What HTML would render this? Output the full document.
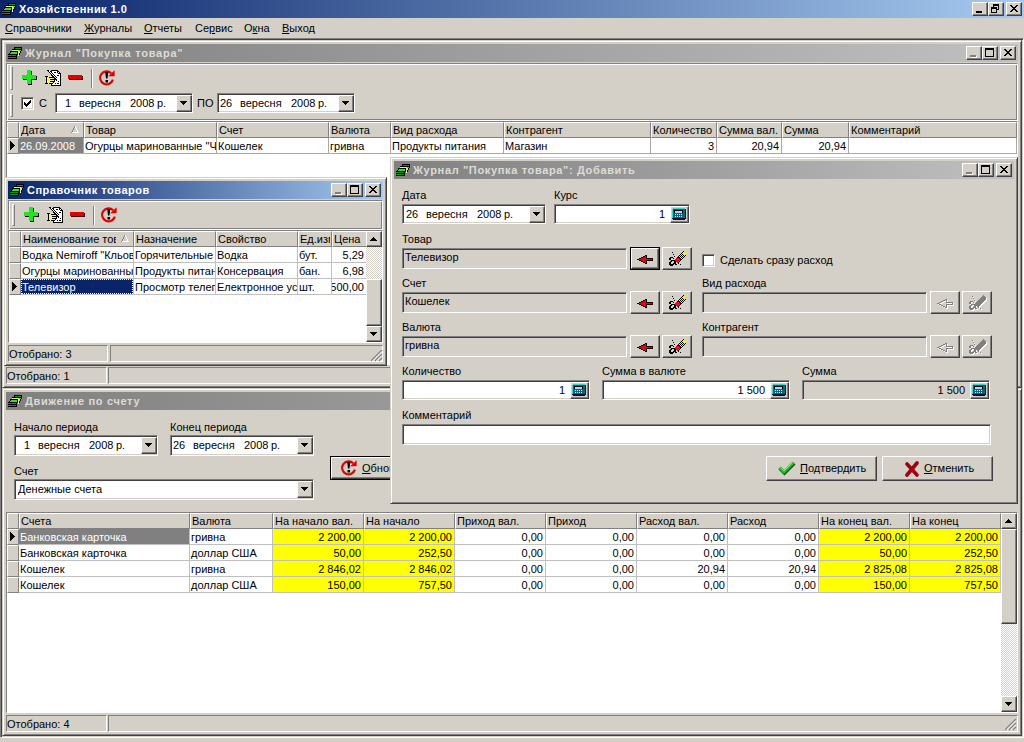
<!DOCTYPE html><html><head><meta charset="utf-8"><style>
html,body{margin:0;padding:0;}
body{width:1024px;height:742px;position:relative;overflow:hidden;background:#D4D0C8;font-family:"Liberation Sans",sans-serif;font-size:11px;}
div{position:absolute;box-sizing:border-box;}
.t{white-space:nowrap;line-height:13px;color:#000;}
.wf{background:#D4D0C8;border:1px solid;border-color:#D4D0C8 #404040 #404040 #D4D0C8;box-shadow:inset 1px 1px #fff,inset -1px -1px #808080;}
.rb{background:#D4D0C8;border:1px solid;border-color:#fff #404040 #404040 #fff;box-shadow:inset -1px -1px #808080;}
.sk{background:#fff;border:1px solid;border-color:#808080 #fff #fff #808080;box-shadow:inset 1px 1px #404040,inset -1px -1px #D4D0C8;}
.sk1{border:1px solid;border-color:#808080 #fff #fff #808080;}
u{text-decoration:underline;text-decoration-thickness:1px;text-underline-offset:1px;}
</style></head><body>
<div class="" style="left:0px;top:0px;width:1024px;height:18px;background:linear-gradient(to right,#0A246A,#A6CAF0)"></div><svg style="position:absolute;left:2px;top:3px;" width="16" height="12" shape-rendering="crispEdges"><path d="M6 0h8v1h-8zM6 1h1v1h-1zM13 1h1v1h-1zM4 2h10v1h-10zM13 3h1v1h-1zM2 4h8v1h-8zM12 4h1v1h-1zM2 5h1v1h-1zM9 5h1v1h-1zM12 5h1v1h-1zM1 6h1v1h-1zM9 6h1v1h-1zM11 6h1v1h-1zM0 7h10v1h-10zM11 7h1v1h-1zM8 8h1v1h-1zM0 9h9v1h-9zM8 10h1v1h-1zM0 11h9v1h-9z" fill="#000"/><path d="M7 1h6v1h-6zM0 8h8v1h-8zM0 10h8v1h-8z" fill="#1c8c1c"/><path d="M4 3h1v1h-1zM10 7h1v1h-1zM10 8h1v1h-1z" fill="#f4f4d8"/><path d="M5 3h6v1h-6zM10 4h2v1h-2zM10 5h2v1h-2zM10 6h1v1h-1z" fill="#e8e870"/><path d="M11 3h2v1h-2z" fill="#a0a028"/><path d="M3 5h6v1h-6zM2 6h7v1h-7z" fill="#30e030"/></svg><div class="t" style="left:19px;top:3px;color:#fff;font-weight:bold;letter-spacing:0.45px">Хозяйственник 1.0</div><div class="rb" style="left:1006px;top:2px;width:16px;height:14px;"></div><svg style="position:absolute;left:1006px;top:2px" width="16" height="14"><path d="M4 3h2v1h1v1h2v-1h1v-1h2v1h-1v1h-1v1h-1v1h1v1h1v1h1v1h-2v-1h-1v-1h-2v1h-1v1h-2v-1h1v-1h1v-1h1v-1h-1v-1h-1v-1h-1z" fill="#000"/></svg><div class="rb" style="left:988px;top:2px;width:16px;height:14px;"></div><svg style="position:absolute;left:988px;top:2px" width="16" height="14"><path d="M5 2h6v6h-2v-1h1v-3h-4v1h-1z M3 5h6v6h-6z M4 7h4v3h-4z" fill="#000" fill-rule="evenodd"/></svg><div class="rb" style="left:972px;top:2px;width:16px;height:14px;"></div><div style="position:absolute;left:976px;top:11px;width:6px;height:2px;background:#000"></div><div class="t" style="left:5px;top:22px;"><u>С</u>правочники</div><div class="t" style="left:84px;top:22px;"><u>Ж</u>урналы</div><div class="t" style="left:144px;top:22px;"><u>О</u>тчеты</div><div class="t" style="left:195px;top:22px;">Се<u>р</u>вис</div><div class="t" style="left:244px;top:22px;">О<u>к</u>на</div><div class="t" style="left:282px;top:22px;"><u>В</u>ыход</div><div class="" style="left:0px;top:38px;width:1024px;height:700px;border:1px solid;border-color:#808080 #fff #fff #808080;box-shadow:inset 1px 1px #404040,inset -1px -1px #D4D0C8;background:#808080"></div><div class="wf" style="left:2px;top:40px;width:1020px;height:348px;"></div><div class="" style="left:6px;top:44px;width:1012px;height:18px;background:linear-gradient(to right,#808080,#C0C0C0)"></div><svg style="position:absolute;left:8px;top:47px;" width="16" height="12" shape-rendering="crispEdges"><path d="M6 0h8v1h-8zM6 1h1v1h-1zM13 1h1v1h-1zM4 2h10v1h-10zM13 3h1v1h-1zM2 4h8v1h-8zM12 4h1v1h-1zM2 5h1v1h-1zM9 5h1v1h-1zM12 5h1v1h-1zM1 6h1v1h-1zM9 6h1v1h-1zM11 6h1v1h-1zM0 7h10v1h-10zM11 7h1v1h-1zM8 8h1v1h-1zM0 9h9v1h-9zM8 10h1v1h-1zM0 11h9v1h-9z" fill="#000"/><path d="M7 1h6v1h-6zM0 8h8v1h-8zM0 10h8v1h-8z" fill="#1c8c1c"/><path d="M4 3h1v1h-1zM10 7h1v1h-1zM10 8h1v1h-1z" fill="#f4f4d8"/><path d="M5 3h6v1h-6zM10 4h2v1h-2zM10 5h2v1h-2zM10 6h1v1h-1z" fill="#e8e870"/><path d="M11 3h2v1h-2z" fill="#a0a028"/><path d="M3 5h6v1h-6zM2 6h7v1h-7z" fill="#30e030"/></svg><div class="t" style="left:25px;top:47px;color:#DEDCD6;font-weight:bold;letter-spacing:0.75px">Журнал "Покупка товара"</div><div class="rb" style="left:1000px;top:46px;width:16px;height:14px;"></div><svg style="position:absolute;left:1000px;top:46px" width="16" height="14"><path d="M4 3h2v1h1v1h2v-1h1v-1h2v1h-1v1h-1v1h-1v1h1v1h1v1h1v1h-2v-1h-1v-1h-2v1h-1v1h-2v-1h1v-1h1v-1h1v-1h-1v-1h-1v-1h-1z" fill="#000"/></svg><div class="rb" style="left:982px;top:46px;width:16px;height:14px;"></div><svg style="position:absolute;left:982px;top:46px" width="16" height="14"><path d="M3 2h9v9h-9z M4 4h7v6h-7z" fill="#000" fill-rule="evenodd"/></svg><div class="rb" style="left:966px;top:46px;width:16px;height:14px;"></div><div style="position:absolute;left:970px;top:55px;width:6px;height:2px;background:#808080;box-shadow:1px 1px #fff"></div><div class="" style="left:6px;top:63px;width:1012px;height:58px;border:1px solid;border-color:#808080 #fff #fff #808080;box-shadow:inset 1px 1px #fff, inset -1px -1px #808080"></div><div class="" style="left:10px;top:66px;width:3px;height:24px;border:1px solid;border-color:#fff #808080 #808080 #fff"></div><div class="" style="left:10px;top:94px;width:3px;height:23px;border:1px solid;border-color:#fff #808080 #808080 #fff"></div><svg style="position:absolute;left:22px;top:70px;" width="15" height="15" shape-rendering="crispEdges"><path d="M5 0h4v1h-4zM5 1h4v1h-4zM5 2h4v1h-4zM5 3h4v1h-4zM5 4h4v1h-4zM0 5h14v1h-14zM0 6h14v1h-14zM0 7h14v1h-14zM0 8h14v1h-14zM5 9h4v1h-4zM5 10h4v1h-4zM5 11h4v1h-4zM5 12h4v1h-4zM5 13h4v1h-4z" fill="#22e622"/><path d="M9 1h1v1h-1zM9 2h1v1h-1zM9 3h1v1h-1zM9 4h1v1h-1zM14 6h1v1h-1zM14 7h1v1h-1zM14 8h1v1h-1zM1 9h4v1h-4zM9 9h6v1h-6zM9 10h1v1h-1zM9 11h1v1h-1zM9 12h1v1h-1zM9 13h1v1h-1zM6 14h4v1h-4z" fill="#000"/></svg><svg style="position:absolute;left:45px;top:70px;" width="16" height="16" shape-rendering="crispEdges"><path d="M2 0h2v1h-2zM6 0h7v1h-7zM3 1h1v1h-1zM5 1h2v1h-2zM12 1h2v1h-2zM4 2h1v1h-1zM6 2h1v1h-1zM9 2h2v1h-2zM12 2h1v1h-1zM14 2h1v1h-1zM5 3h1v1h-1zM7 3h1v1h-1zM13 3h3v1h-3zM6 4h1v1h-1zM8 4h1v1h-1zM15 4h1v1h-1zM6 5h2v1h-2zM9 5h1v1h-1zM12 5h2v1h-2zM15 5h1v1h-1zM0 6h3v1h-3zM7 6h2v1h-2zM10 6h1v1h-1zM15 6h1v1h-1zM1 7h1v1h-1zM4 7h6v1h-6zM11 7h1v1h-1zM15 7h1v1h-1zM1 8h1v1h-1zM9 8h2v1h-2zM15 8h1v1h-1zM1 9h1v1h-1zM5 9h7v1h-7zM15 9h1v1h-1zM1 10h1v1h-1zM9 10h1v1h-1zM11 10h1v1h-1zM15 10h1v1h-1zM1 11h1v1h-1zM5 11h5v1h-5zM13 11h1v1h-1zM15 11h1v1h-1zM1 12h1v1h-1zM8 12h1v1h-1zM15 12h1v1h-1zM0 13h3v1h-3zM4 13h4v1h-4zM10 13h1v1h-1zM12 13h2v1h-2zM15 13h1v1h-1zM6 14h1v1h-1zM15 14h1v1h-1zM6 15h10v1h-10z" fill="#000"/><path d="M4 1h1v1h-1zM7 1h5v1h-5zM5 2h1v1h-1zM7 2h2v1h-2zM11 2h1v1h-1zM13 2h1v1h-1zM6 3h1v1h-1zM8 3h5v1h-5zM7 4h1v1h-1zM9 4h6v1h-6zM8 5h1v1h-1zM10 5h2v1h-2zM14 5h1v1h-1zM9 6h1v1h-1zM11 6h4v1h-4zM10 7h1v1h-1zM12 7h3v1h-3zM11 8h4v1h-4zM12 9h3v1h-3zM10 10h1v1h-1zM12 10h3v1h-3zM10 11h3v1h-3zM14 11h1v1h-1zM9 12h6v1h-6zM8 13h2v1h-2zM11 13h1v1h-1zM14 13h1v1h-1zM7 14h8v1h-8z" fill="#fff"/><path d="M3 6h4v1h-4zM2 7h2v1h-2zM2 8h7v1h-7zM2 9h3v1h-3zM2 10h7v1h-7zM2 11h3v1h-3zM2 12h6v1h-6zM3 13h1v1h-1z" fill="#f0f088"/></svg><svg style="position:absolute;left:68px;top:75px;" width="15" height="5" shape-rendering="crispEdges"><path d="M0 0h14v1h-14zM0 1h14v1h-14zM0 2h14v1h-14zM0 3h14v1h-14z" fill="#e00000"/><path d="M14 1h1v1h-1zM14 2h1v1h-1zM14 3h1v1h-1zM1 4h14v1h-14z" fill="#400000"/></svg><div class="" style="left:91px;top:69px;width:2px;height:19px;border-left:1px solid #808080;border-right:1px solid #fff"></div><svg style="position:absolute;left:99px;top:70px" width="16" height="16" viewBox="0 0 16 16">
<path d="M13.9 9.6 A6.5 6.5 0 1 1 12.2 3.2" stroke="#e00000" stroke-width="2.1" fill="none"/>
<path d="M9.2 6.2L15.6 6.2L15.6 0.2z" fill="#e00000"/>
<path d="M6.2 2h3.1l-0.8 6.5h-1.5z M6.5 10h2.5v2.5h-2.5z" fill="#000"/></svg><div class="sk" style="left:21px;top:97px;width:13px;height:13px;"></div><svg style="position:absolute;left:24px;top:100px;" width="7" height="7" shape-rendering="crispEdges"><path d="M6 0h1v1h-1zM5 1h2v1h-2zM0 2h1v1h-1zM4 2h3v1h-3zM0 3h2v1h-2zM3 3h3v1h-3zM0 4h5v1h-5zM1 5h3v1h-3zM2 6h1v1h-1z" fill="#000"/></svg><div class="t" style="left:39px;top:97px;">С</div><div class="sk" style="left:55px;top:93px;width:138px;height:20px;background:#fff"></div><div class="rb" style="left:176px;top:95px;width:16px;height:17px;"></div><svg style="position:absolute;left:180px;top:101px" width="7" height="4"><path d="M0 0h7v1h-1v1h-1v1h-1v1h-1v-1h-1v-1h-1v-1h-1z" fill="#000"/></svg><div class="t" style="left:65px;top:97px;">1</div><div class="t" style="left:79px;top:97px;">вересня</div><div class="t" style="left:130px;top:97px;">2008</div><div class="t" style="left:157px;top:97px;">р.</div><div class="t" style="left:197px;top:97px;">ПО</div><div class="sk" style="left:217px;top:93px;width:138px;height:20px;background:#fff"></div><div class="rb" style="left:338px;top:95px;width:16px;height:17px;"></div><svg style="position:absolute;left:342px;top:101px" width="7" height="4"><path d="M0 0h7v1h-1v1h-1v1h-1v1h-1v-1h-1v-1h-1v-1h-1z" fill="#000"/></svg><div class="t" style="left:220px;top:97px;">26</div><div class="t" style="left:240px;top:97px;">вересня</div><div class="t" style="left:291px;top:97px;">2008</div><div class="t" style="left:318px;top:97px;">р.</div><div class="" style="left:6px;top:121px;width:1012px;height:244px;background:#fff;border:1px solid;border-color:#808080 #fff #fff #808080"></div><div style="left:7px;top:122px;width:1010px;height:242px;overflow:hidden"><div style="left:0px;top:0px;width:12px;height:16px;background:#D4D0C8;border-top:1px solid #fff;border-left:1px solid #fff;border-right:1px solid #808080;border-bottom:1px solid #808080"></div><div style="left:12px;top:0px;width:65px;height:16px;background:#D4D0C8;border-top:1px solid #fff;border-left:1px solid #fff;border-right:1px solid #808080;border-bottom:1px solid #808080"></div><div style="left:77px;top:0px;width:133px;height:16px;background:#D4D0C8;border-top:1px solid #fff;border-left:1px solid #fff;border-right:1px solid #808080;border-bottom:1px solid #808080"></div><div style="left:210px;top:0px;width:112px;height:16px;background:#D4D0C8;border-top:1px solid #fff;border-left:1px solid #fff;border-right:1px solid #808080;border-bottom:1px solid #808080"></div><div style="left:322px;top:0px;width:62px;height:16px;background:#D4D0C8;border-top:1px solid #fff;border-left:1px solid #fff;border-right:1px solid #808080;border-bottom:1px solid #808080"></div><div style="left:384px;top:0px;width:113px;height:16px;background:#D4D0C8;border-top:1px solid #fff;border-left:1px solid #fff;border-right:1px solid #808080;border-bottom:1px solid #808080"></div><div style="left:497px;top:0px;width:147px;height:16px;background:#D4D0C8;border-top:1px solid #fff;border-left:1px solid #fff;border-right:1px solid #808080;border-bottom:1px solid #808080"></div><div style="left:644px;top:0px;width:66px;height:16px;background:#D4D0C8;border-top:1px solid #fff;border-left:1px solid #fff;border-right:1px solid #808080;border-bottom:1px solid #808080"></div><div style="left:710px;top:0px;width:65px;height:16px;background:#D4D0C8;border-top:1px solid #fff;border-left:1px solid #fff;border-right:1px solid #808080;border-bottom:1px solid #808080"></div><div style="left:775px;top:0px;width:67px;height:16px;background:#D4D0C8;border-top:1px solid #fff;border-left:1px solid #fff;border-right:1px solid #808080;border-bottom:1px solid #808080"></div><div style="left:842px;top:0px;width:168px;height:16px;background:#D4D0C8;border-top:1px solid #fff;border-left:1px solid #fff;border-right:1px solid #808080;border-bottom:1px solid #808080"></div><div class="t" style="left:14px;top:2px;width:45px;overflow:hidden">Дата</div><svg style="position:absolute;left:64px;top:4px;" width="8" height="7" shape-rendering="crispEdges"><path d="M3 0h1v1h-1zM3 1h1v1h-1zM2 2h1v1h-1zM2 3h1v1h-1zM1 4h1v1h-1zM1 5h1v1h-1zM0 6h1v1h-1z" fill="#808080"/><path d="M4 0h1v1h-1zM4 1h1v1h-1zM5 2h1v1h-1zM5 3h1v1h-1zM6 4h1v1h-1zM6 5h1v1h-1zM1 6h7v1h-7z" fill="#fff"/></svg><div class="t" style="left:79px;top:2px;width:129px;overflow:hidden">Товар</div><div class="t" style="left:212px;top:2px;width:108px;overflow:hidden">Счет</div><div class="t" style="left:324px;top:2px;width:58px;overflow:hidden">Валюта</div><div class="t" style="left:386px;top:2px;width:109px;overflow:hidden">Вид расхода</div><div class="t" style="left:499px;top:2px;width:143px;overflow:hidden">Контрагент</div><div class="t" style="left:646px;top:2px;width:62px;overflow:hidden">Количество</div><div class="t" style="left:712px;top:2px;width:61px;overflow:hidden">Сумма вал.</div><div class="t" style="left:777px;top:2px;width:63px;overflow:hidden">Сумма</div><div class="t" style="left:844px;top:2px;width:164px;overflow:hidden">Комментарий</div><div style="left:0px;top:16px;width:12px;height:16px;background:#D4D0C8;border-top:1px solid #fff;border-left:1px solid #fff;border-right:1px solid #808080;border-bottom:1px solid #808080"></div><svg style="position:absolute;left:3px;top:19px;" width="5" height="9" shape-rendering="crispEdges"><path d="M0 0h1v1h-1zM0 1h2v1h-2zM0 2h3v1h-3zM0 3h4v1h-4zM0 4h5v1h-5zM0 5h4v1h-4zM0 6h3v1h-3zM0 7h2v1h-2zM0 8h1v1h-1z" fill="#000"/></svg><div style="left:12px;top:16px;width:65px;height:16px;background:#808080;border-right:1px solid #a8a8a8;border-bottom:1px solid #a8a8a8;overflow:hidden"><div class="t" style="left:1px;top:2px;color:#fff">26.09.2008</div></div><div style="left:77px;top:16px;width:133px;height:16px;background:#fff;border-right:1px solid #a8a8a8;border-bottom:1px solid #a8a8a8;overflow:hidden"><div class="t" style="left:1px;top:2px;color:#000">Огурцы маринованные "Ч</div></div><div style="left:210px;top:16px;width:112px;height:16px;background:#fff;border-right:1px solid #a8a8a8;border-bottom:1px solid #a8a8a8;overflow:hidden"><div class="t" style="left:1px;top:2px;color:#000">Кошелек</div></div><div style="left:322px;top:16px;width:62px;height:16px;background:#fff;border-right:1px solid #a8a8a8;border-bottom:1px solid #a8a8a8;overflow:hidden"><div class="t" style="left:1px;top:2px;color:#000">гривна</div></div><div style="left:384px;top:16px;width:113px;height:16px;background:#fff;border-right:1px solid #a8a8a8;border-bottom:1px solid #a8a8a8;overflow:hidden"><div class="t" style="left:1px;top:2px;color:#000">Продукты питания</div></div><div style="left:497px;top:16px;width:147px;height:16px;background:#fff;border-right:1px solid #a8a8a8;border-bottom:1px solid #a8a8a8;overflow:hidden"><div class="t" style="left:1px;top:2px;color:#000">Магазин</div></div><div style="left:644px;top:16px;width:66px;height:16px;background:#fff;border-right:1px solid #a8a8a8;border-bottom:1px solid #a8a8a8;overflow:hidden"><div class="t" style="right:2px;top:2px;color:#000">3</div></div><div style="left:710px;top:16px;width:65px;height:16px;background:#fff;border-right:1px solid #a8a8a8;border-bottom:1px solid #a8a8a8;overflow:hidden"><div class="t" style="right:2px;top:2px;color:#000">20,94</div></div><div style="left:775px;top:16px;width:67px;height:16px;background:#fff;border-right:1px solid #a8a8a8;border-bottom:1px solid #a8a8a8;overflow:hidden"><div class="t" style="right:2px;top:2px;color:#000">20,94</div></div><div style="left:842px;top:16px;width:168px;height:16px;background:#fff;border-right:1px solid #a8a8a8;border-bottom:1px solid #a8a8a8;overflow:hidden"><div class="t" style="left:1px;top:2px;color:#000"></div></div></div><div class="sk1" style="left:6px;top:367px;width:101px;height:17px;"></div><div class="t" style="left:7px;top:370px;">Отобрано: 1</div><div class="sk1" style="left:108px;top:367px;width:910px;height:17px;"></div><div class="wf" style="left:2px;top:388px;width:1020px;height:348px;"></div><div class="" style="left:6px;top:392px;width:1012px;height:18px;background:linear-gradient(to right,#808080,#C0C0C0)"></div><svg style="position:absolute;left:8px;top:395px;" width="16" height="12" shape-rendering="crispEdges"><path d="M6 0h8v1h-8zM6 1h1v1h-1zM13 1h1v1h-1zM4 2h10v1h-10zM13 3h1v1h-1zM2 4h8v1h-8zM12 4h1v1h-1zM2 5h1v1h-1zM9 5h1v1h-1zM12 5h1v1h-1zM1 6h1v1h-1zM9 6h1v1h-1zM11 6h1v1h-1zM0 7h10v1h-10zM11 7h1v1h-1zM8 8h1v1h-1zM0 9h9v1h-9zM8 10h1v1h-1zM0 11h9v1h-9z" fill="#000"/><path d="M7 1h6v1h-6zM0 8h8v1h-8zM0 10h8v1h-8z" fill="#1c8c1c"/><path d="M4 3h1v1h-1zM10 7h1v1h-1zM10 8h1v1h-1z" fill="#f4f4d8"/><path d="M5 3h6v1h-6zM10 4h2v1h-2zM10 5h2v1h-2zM10 6h1v1h-1z" fill="#e8e870"/><path d="M11 3h2v1h-2z" fill="#a0a028"/><path d="M3 5h6v1h-6zM2 6h7v1h-7z" fill="#30e030"/></svg><div class="t" style="left:25px;top:395px;color:#DEDCD6;font-weight:bold;letter-spacing:0.65px">Движение по счету</div><div class="rb" style="left:1000px;top:394px;width:16px;height:14px;"></div><svg style="position:absolute;left:1000px;top:394px" width="16" height="14"><path d="M4 3h2v1h1v1h2v-1h1v-1h2v1h-1v1h-1v1h-1v1h1v1h1v1h1v1h-2v-1h-1v-1h-2v1h-1v1h-2v-1h1v-1h1v-1h1v-1h-1v-1h-1v-1h-1z" fill="#000"/></svg><div class="rb" style="left:982px;top:394px;width:16px;height:14px;"></div><svg style="position:absolute;left:982px;top:394px" width="16" height="14"><path d="M3 2h9v9h-9z M4 4h7v6h-7z" fill="#000" fill-rule="evenodd"/></svg><div class="rb" style="left:966px;top:394px;width:16px;height:14px;"></div><div style="position:absolute;left:970px;top:403px;width:6px;height:2px;background:#808080;box-shadow:1px 1px #fff"></div><div class="t" style="left:14px;top:421px;">Начало периода</div><div class="sk" style="left:14px;top:435px;width:144px;height:21px;background:#fff"></div><div class="rb" style="left:141px;top:437px;width:16px;height:17px;"></div><svg style="position:absolute;left:145px;top:443px" width="7" height="4"><path d="M0 0h7v1h-1v1h-1v1h-1v1h-1v-1h-1v-1h-1v-1h-1z" fill="#000"/></svg><div class="t" style="left:24px;top:439px;">1</div><div class="t" style="left:38px;top:439px;">вересня</div><div class="t" style="left:89px;top:439px;">2008</div><div class="t" style="left:116px;top:439px;">р.</div><div class="t" style="left:170px;top:421px;">Конец периода</div><div class="sk" style="left:170px;top:435px;width:144px;height:21px;background:#fff"></div><div class="rb" style="left:297px;top:437px;width:16px;height:17px;"></div><svg style="position:absolute;left:301px;top:443px" width="7" height="4"><path d="M0 0h7v1h-1v1h-1v1h-1v1h-1v-1h-1v-1h-1v-1h-1z" fill="#000"/></svg><div class="t" style="left:173px;top:439px;">26</div><div class="t" style="left:193px;top:439px;">вересня</div><div class="t" style="left:244px;top:439px;">2008</div><div class="t" style="left:271px;top:439px;">р.</div><div class="t" style="left:14px;top:465px;">Счет</div><div class="sk" style="left:14px;top:479px;width:300px;height:21px;background:#fff"></div><div class="rb" style="left:297px;top:481px;width:16px;height:17px;"></div><svg style="position:absolute;left:301px;top:487px" width="7" height="4"><path d="M0 0h7v1h-1v1h-1v1h-1v1h-1v-1h-1v-1h-1v-1h-1z" fill="#000"/></svg><div class="t" style="left:18px;top:483px;">Денежные счета</div><div class="" style="left:330px;top:456px;width:90px;height:24px;border:1px solid #000"></div><div class="rb" style="left:331px;top:457px;width:88px;height:22px;"></div><svg style="position:absolute;left:341px;top:460px" width="16" height="16" viewBox="0 0 16 16">
<path d="M13.9 9.6 A6.5 6.5 0 1 1 12.2 3.2" stroke="#e00000" stroke-width="2.1" fill="none"/>
<path d="M9.2 6.2L15.6 6.2L15.6 0.2z" fill="#e00000"/>
<path d="M6.2 2h3.1l-0.8 6.5h-1.5z M6.5 10h2.5v2.5h-2.5z" fill="#000"/></svg><div class="t" style="left:362px;top:462px;"><u>О</u>бновить</div><div class="" style="left:6px;top:512px;width:1012px;height:201px;background:#fff;border:1px solid;border-color:#808080 #fff #fff #808080"></div><div style="left:7px;top:513px;width:1010px;height:199px;overflow:hidden"><div style="left:0px;top:0px;width:12px;height:16px;background:#D4D0C8;border-top:1px solid #fff;border-left:1px solid #fff;border-right:1px solid #808080;border-bottom:1px solid #808080"></div><div style="left:12px;top:0px;width:171px;height:16px;background:#D4D0C8;border-top:1px solid #fff;border-left:1px solid #fff;border-right:1px solid #808080;border-bottom:1px solid #808080"></div><div style="left:183px;top:0px;width:83px;height:16px;background:#D4D0C8;border-top:1px solid #fff;border-left:1px solid #fff;border-right:1px solid #808080;border-bottom:1px solid #808080"></div><div style="left:266px;top:0px;width:91px;height:16px;background:#D4D0C8;border-top:1px solid #fff;border-left:1px solid #fff;border-right:1px solid #808080;border-bottom:1px solid #808080"></div><div style="left:357px;top:0px;width:91px;height:16px;background:#D4D0C8;border-top:1px solid #fff;border-left:1px solid #fff;border-right:1px solid #808080;border-bottom:1px solid #808080"></div><div style="left:448px;top:0px;width:91px;height:16px;background:#D4D0C8;border-top:1px solid #fff;border-left:1px solid #fff;border-right:1px solid #808080;border-bottom:1px solid #808080"></div><div style="left:539px;top:0px;width:91px;height:16px;background:#D4D0C8;border-top:1px solid #fff;border-left:1px solid #fff;border-right:1px solid #808080;border-bottom:1px solid #808080"></div><div style="left:630px;top:0px;width:91px;height:16px;background:#D4D0C8;border-top:1px solid #fff;border-left:1px solid #fff;border-right:1px solid #808080;border-bottom:1px solid #808080"></div><div style="left:721px;top:0px;width:91px;height:16px;background:#D4D0C8;border-top:1px solid #fff;border-left:1px solid #fff;border-right:1px solid #808080;border-bottom:1px solid #808080"></div><div style="left:812px;top:0px;width:91px;height:16px;background:#D4D0C8;border-top:1px solid #fff;border-left:1px solid #fff;border-right:1px solid #808080;border-bottom:1px solid #808080"></div><div style="left:903px;top:0px;width:91px;height:16px;background:#D4D0C8;border-top:1px solid #fff;border-left:1px solid #fff;border-right:1px solid #808080;border-bottom:1px solid #808080"></div><div class="t" style="left:14px;top:2px;width:167px;overflow:hidden">Счета</div><div class="t" style="left:185px;top:2px;width:79px;overflow:hidden">Валюта</div><div class="t" style="left:268px;top:2px;width:87px;overflow:hidden">На начало вал.</div><div class="t" style="left:359px;top:2px;width:87px;overflow:hidden">На начало</div><div class="t" style="left:450px;top:2px;width:87px;overflow:hidden">Приход вал.</div><div class="t" style="left:541px;top:2px;width:87px;overflow:hidden">Приход</div><div class="t" style="left:632px;top:2px;width:87px;overflow:hidden">Расход вал.</div><div class="t" style="left:723px;top:2px;width:87px;overflow:hidden">Расход</div><div class="t" style="left:814px;top:2px;width:87px;overflow:hidden">На конец вал.</div><div class="t" style="left:905px;top:2px;width:87px;overflow:hidden">На конец</div><div style="left:0px;top:16px;width:12px;height:16px;background:#D4D0C8;border-top:1px solid #fff;border-left:1px solid #fff;border-right:1px solid #808080;border-bottom:1px solid #808080"></div><svg style="position:absolute;left:3px;top:19px;" width="5" height="9" shape-rendering="crispEdges"><path d="M0 0h1v1h-1zM0 1h2v1h-2zM0 2h3v1h-3zM0 3h4v1h-4zM0 4h5v1h-5zM0 5h4v1h-4zM0 6h3v1h-3zM0 7h2v1h-2zM0 8h1v1h-1z" fill="#000"/></svg><div style="left:12px;top:16px;width:171px;height:16px;background:#808080;border-right:1px solid #c0c0c0;border-bottom:1px solid #c0c0c0;overflow:hidden"><div class="t" style="left:1px;top:2px;color:#fff">Банковская карточка</div></div><div style="left:183px;top:16px;width:83px;height:16px;background:#fff;border-right:1px solid #c0c0c0;border-bottom:1px solid #c0c0c0;overflow:hidden"><div class="t" style="left:1px;top:2px;color:#000">гривна</div></div><div style="left:266px;top:16px;width:91px;height:16px;background:#ffff00;border-right:1px solid #c0c0c0;border-bottom:1px solid #c0c0c0;overflow:hidden"><div class="t" style="right:2px;top:2px;color:#000">2 200,00</div></div><div style="left:357px;top:16px;width:91px;height:16px;background:#ffff00;border-right:1px solid #c0c0c0;border-bottom:1px solid #c0c0c0;overflow:hidden"><div class="t" style="right:2px;top:2px;color:#000">2 200,00</div></div><div style="left:448px;top:16px;width:91px;height:16px;background:#fff;border-right:1px solid #c0c0c0;border-bottom:1px solid #c0c0c0;overflow:hidden"><div class="t" style="right:2px;top:2px;color:#000">0,00</div></div><div style="left:539px;top:16px;width:91px;height:16px;background:#fff;border-right:1px solid #c0c0c0;border-bottom:1px solid #c0c0c0;overflow:hidden"><div class="t" style="right:2px;top:2px;color:#000">0,00</div></div><div style="left:630px;top:16px;width:91px;height:16px;background:#fff;border-right:1px solid #c0c0c0;border-bottom:1px solid #c0c0c0;overflow:hidden"><div class="t" style="right:2px;top:2px;color:#000">0,00</div></div><div style="left:721px;top:16px;width:91px;height:16px;background:#fff;border-right:1px solid #c0c0c0;border-bottom:1px solid #c0c0c0;overflow:hidden"><div class="t" style="right:2px;top:2px;color:#000">0,00</div></div><div style="left:812px;top:16px;width:91px;height:16px;background:#ffff00;border-right:1px solid #c0c0c0;border-bottom:1px solid #c0c0c0;overflow:hidden"><div class="t" style="right:2px;top:2px;color:#000">2 200,00</div></div><div style="left:903px;top:16px;width:91px;height:16px;background:#ffff00;border-right:1px solid #c0c0c0;border-bottom:1px solid #c0c0c0;overflow:hidden"><div class="t" style="right:2px;top:2px;color:#000">2 200,00</div></div><div style="left:0px;top:32px;width:12px;height:16px;background:#D4D0C8;border-top:1px solid #fff;border-left:1px solid #fff;border-right:1px solid #808080;border-bottom:1px solid #808080"></div><div style="left:12px;top:32px;width:171px;height:16px;background:#fff;border-right:1px solid #c0c0c0;border-bottom:1px solid #c0c0c0;overflow:hidden"><div class="t" style="left:1px;top:2px;color:#000">Банковская карточка</div></div><div style="left:183px;top:32px;width:83px;height:16px;background:#fff;border-right:1px solid #c0c0c0;border-bottom:1px solid #c0c0c0;overflow:hidden"><div class="t" style="left:1px;top:2px;color:#000">доллар США</div></div><div style="left:266px;top:32px;width:91px;height:16px;background:#ffff00;border-right:1px solid #c0c0c0;border-bottom:1px solid #c0c0c0;overflow:hidden"><div class="t" style="right:2px;top:2px;color:#000">50,00</div></div><div style="left:357px;top:32px;width:91px;height:16px;background:#ffff00;border-right:1px solid #c0c0c0;border-bottom:1px solid #c0c0c0;overflow:hidden"><div class="t" style="right:2px;top:2px;color:#000">252,50</div></div><div style="left:448px;top:32px;width:91px;height:16px;background:#fff;border-right:1px solid #c0c0c0;border-bottom:1px solid #c0c0c0;overflow:hidden"><div class="t" style="right:2px;top:2px;color:#000">0,00</div></div><div style="left:539px;top:32px;width:91px;height:16px;background:#fff;border-right:1px solid #c0c0c0;border-bottom:1px solid #c0c0c0;overflow:hidden"><div class="t" style="right:2px;top:2px;color:#000">0,00</div></div><div style="left:630px;top:32px;width:91px;height:16px;background:#fff;border-right:1px solid #c0c0c0;border-bottom:1px solid #c0c0c0;overflow:hidden"><div class="t" style="right:2px;top:2px;color:#000">0,00</div></div><div style="left:721px;top:32px;width:91px;height:16px;background:#fff;border-right:1px solid #c0c0c0;border-bottom:1px solid #c0c0c0;overflow:hidden"><div class="t" style="right:2px;top:2px;color:#000">0,00</div></div><div style="left:812px;top:32px;width:91px;height:16px;background:#ffff00;border-right:1px solid #c0c0c0;border-bottom:1px solid #c0c0c0;overflow:hidden"><div class="t" style="right:2px;top:2px;color:#000">50,00</div></div><div style="left:903px;top:32px;width:91px;height:16px;background:#ffff00;border-right:1px solid #c0c0c0;border-bottom:1px solid #c0c0c0;overflow:hidden"><div class="t" style="right:2px;top:2px;color:#000">252,50</div></div><div style="left:0px;top:48px;width:12px;height:16px;background:#D4D0C8;border-top:1px solid #fff;border-left:1px solid #fff;border-right:1px solid #808080;border-bottom:1px solid #808080"></div><div style="left:12px;top:48px;width:171px;height:16px;background:#fff;border-right:1px solid #c0c0c0;border-bottom:1px solid #c0c0c0;overflow:hidden"><div class="t" style="left:1px;top:2px;color:#000">Кошелек</div></div><div style="left:183px;top:48px;width:83px;height:16px;background:#fff;border-right:1px solid #c0c0c0;border-bottom:1px solid #c0c0c0;overflow:hidden"><div class="t" style="left:1px;top:2px;color:#000">гривна</div></div><div style="left:266px;top:48px;width:91px;height:16px;background:#ffff00;border-right:1px solid #c0c0c0;border-bottom:1px solid #c0c0c0;overflow:hidden"><div class="t" style="right:2px;top:2px;color:#000">2 846,02</div></div><div style="left:357px;top:48px;width:91px;height:16px;background:#ffff00;border-right:1px solid #c0c0c0;border-bottom:1px solid #c0c0c0;overflow:hidden"><div class="t" style="right:2px;top:2px;color:#000">2 846,02</div></div><div style="left:448px;top:48px;width:91px;height:16px;background:#fff;border-right:1px solid #c0c0c0;border-bottom:1px solid #c0c0c0;overflow:hidden"><div class="t" style="right:2px;top:2px;color:#000">0,00</div></div><div style="left:539px;top:48px;width:91px;height:16px;background:#fff;border-right:1px solid #c0c0c0;border-bottom:1px solid #c0c0c0;overflow:hidden"><div class="t" style="right:2px;top:2px;color:#000">0,00</div></div><div style="left:630px;top:48px;width:91px;height:16px;background:#fff;border-right:1px solid #c0c0c0;border-bottom:1px solid #c0c0c0;overflow:hidden"><div class="t" style="right:2px;top:2px;color:#000">20,94</div></div><div style="left:721px;top:48px;width:91px;height:16px;background:#fff;border-right:1px solid #c0c0c0;border-bottom:1px solid #c0c0c0;overflow:hidden"><div class="t" style="right:2px;top:2px;color:#000">20,94</div></div><div style="left:812px;top:48px;width:91px;height:16px;background:#ffff00;border-right:1px solid #c0c0c0;border-bottom:1px solid #c0c0c0;overflow:hidden"><div class="t" style="right:2px;top:2px;color:#000">2 825,08</div></div><div style="left:903px;top:48px;width:91px;height:16px;background:#ffff00;border-right:1px solid #c0c0c0;border-bottom:1px solid #c0c0c0;overflow:hidden"><div class="t" style="right:2px;top:2px;color:#000">2 825,08</div></div><div style="left:0px;top:64px;width:12px;height:16px;background:#D4D0C8;border-top:1px solid #fff;border-left:1px solid #fff;border-right:1px solid #808080;border-bottom:1px solid #808080"></div><div style="left:12px;top:64px;width:171px;height:16px;background:#fff;border-right:1px solid #c0c0c0;border-bottom:1px solid #c0c0c0;overflow:hidden"><div class="t" style="left:1px;top:2px;color:#000">Кошелек</div></div><div style="left:183px;top:64px;width:83px;height:16px;background:#fff;border-right:1px solid #c0c0c0;border-bottom:1px solid #c0c0c0;overflow:hidden"><div class="t" style="left:1px;top:2px;color:#000">доллар США</div></div><div style="left:266px;top:64px;width:91px;height:16px;background:#ffff00;border-right:1px solid #c0c0c0;border-bottom:1px solid #c0c0c0;overflow:hidden"><div class="t" style="right:2px;top:2px;color:#000">150,00</div></div><div style="left:357px;top:64px;width:91px;height:16px;background:#ffff00;border-right:1px solid #c0c0c0;border-bottom:1px solid #c0c0c0;overflow:hidden"><div class="t" style="right:2px;top:2px;color:#000">757,50</div></div><div style="left:448px;top:64px;width:91px;height:16px;background:#fff;border-right:1px solid #c0c0c0;border-bottom:1px solid #c0c0c0;overflow:hidden"><div class="t" style="right:2px;top:2px;color:#000">0,00</div></div><div style="left:539px;top:64px;width:91px;height:16px;background:#fff;border-right:1px solid #c0c0c0;border-bottom:1px solid #c0c0c0;overflow:hidden"><div class="t" style="right:2px;top:2px;color:#000">0,00</div></div><div style="left:630px;top:64px;width:91px;height:16px;background:#fff;border-right:1px solid #c0c0c0;border-bottom:1px solid #c0c0c0;overflow:hidden"><div class="t" style="right:2px;top:2px;color:#000">0,00</div></div><div style="left:721px;top:64px;width:91px;height:16px;background:#fff;border-right:1px solid #c0c0c0;border-bottom:1px solid #c0c0c0;overflow:hidden"><div class="t" style="right:2px;top:2px;color:#000">0,00</div></div><div style="left:812px;top:64px;width:91px;height:16px;background:#ffff00;border-right:1px solid #c0c0c0;border-bottom:1px solid #c0c0c0;overflow:hidden"><div class="t" style="right:2px;top:2px;color:#000">150,00</div></div><div style="left:903px;top:64px;width:91px;height:16px;background:#ffff00;border-right:1px solid #c0c0c0;border-bottom:1px solid #c0c0c0;overflow:hidden"><div class="t" style="right:2px;top:2px;color:#000">757,50</div></div></div><div class="" style="left:1001px;top:513px;width:16px;height:199px;background-color:#fff;background-image:linear-gradient(45deg,#D4D0C8 25%,transparent 25%,transparent 75%,#D4D0C8 75%),linear-gradient(45deg,#D4D0C8 25%,transparent 25%,transparent 75%,#D4D0C8 75%);background-size:2px 2px;background-position:0 0,1px 1px"></div><div class="rb" style="left:1001px;top:513px;width:16px;height:16px;"></div><svg style="position:absolute;left:1005px;top:519px" width="7" height="4"><path d="M3 0h1v1h1v1h1v1h1v1h-7v-1h1v-1h1v-1h1z" fill="#000"/></svg><div class="rb" style="left:1001px;top:696px;width:16px;height:16px;"></div><svg style="position:absolute;left:1005px;top:702px" width="7" height="4"><path d="M0 0h7v1h-1v1h-1v1h-1v1h-1v-1h-1v-1h-1v-1h-1z" fill="#000"/></svg><div class="rb" style="left:1001px;top:529px;width:16px;height:95px;"></div><div class="sk1" style="left:6px;top:715px;width:101px;height:17px;"></div><div class="t" style="left:7px;top:718px;">Отобрано: 4</div><div class="sk1" style="left:108px;top:715px;width:910px;height:17px;"></div><svg style="position:absolute;left:1005px;top:719px" width="12" height="12">
<path d="M11 0L0 11M11 4L4 11M11 8L8 11" stroke="#808080" stroke-width="1.4"/>
<path d="M11 1.5L1.5 11M11 5.5L5.5 11M11 9.5L9.5 11" stroke="#fff" stroke-width="1"/></svg><div class="wf" style="left:4px;top:177px;width:383px;height:189px;"></div><div class="" style="left:8px;top:181px;width:375px;height:18px;background:linear-gradient(to right,#0A246A,#A6CAF0)"></div><svg style="position:absolute;left:10px;top:184px;" width="16" height="12" shape-rendering="crispEdges"><path d="M6 0h8v1h-8zM6 1h1v1h-1zM13 1h1v1h-1zM4 2h10v1h-10zM13 3h1v1h-1zM2 4h8v1h-8zM12 4h1v1h-1zM2 5h1v1h-1zM9 5h1v1h-1zM12 5h1v1h-1zM1 6h1v1h-1zM9 6h1v1h-1zM11 6h1v1h-1zM0 7h10v1h-10zM11 7h1v1h-1zM8 8h1v1h-1zM0 9h9v1h-9zM8 10h1v1h-1zM0 11h9v1h-9z" fill="#000"/><path d="M7 1h6v1h-6zM0 8h8v1h-8zM0 10h8v1h-8z" fill="#1c8c1c"/><path d="M4 3h1v1h-1zM10 7h1v1h-1zM10 8h1v1h-1z" fill="#f4f4d8"/><path d="M5 3h6v1h-6zM10 4h2v1h-2zM10 5h2v1h-2zM10 6h1v1h-1z" fill="#e8e870"/><path d="M11 3h2v1h-2z" fill="#a0a028"/><path d="M3 5h6v1h-6zM2 6h7v1h-7z" fill="#30e030"/></svg><div class="t" style="left:27px;top:184px;color:#fff;font-weight:bold;letter-spacing:0.5px">Справочник товаров</div><div class="rb" style="left:365px;top:183px;width:16px;height:14px;"></div><svg style="position:absolute;left:365px;top:183px" width="16" height="14"><path d="M4 3h2v1h1v1h2v-1h1v-1h2v1h-1v1h-1v1h-1v1h1v1h1v1h1v1h-2v-1h-1v-1h-2v1h-1v1h-2v-1h1v-1h1v-1h1v-1h-1v-1h-1v-1h-1z" fill="#000"/></svg><div class="rb" style="left:347px;top:183px;width:16px;height:14px;"></div><svg style="position:absolute;left:347px;top:183px" width="16" height="14"><path d="M3 2h9v9h-9z M4 4h7v6h-7z" fill="#000" fill-rule="evenodd"/></svg><div class="rb" style="left:331px;top:183px;width:16px;height:14px;"></div><div style="position:absolute;left:335px;top:192px;width:6px;height:2px;background:#808080;box-shadow:1px 1px #fff"></div><div class="" style="left:8px;top:200px;width:375px;height:30px;border:1px solid;border-color:#808080 #fff #fff #808080;box-shadow:inset 1px 1px #fff, inset -1px -1px #808080"></div><div class="" style="left:12px;top:204px;width:3px;height:22px;border:1px solid;border-color:#fff #808080 #808080 #fff"></div><svg style="position:absolute;left:24px;top:207px;" width="15" height="15" shape-rendering="crispEdges"><path d="M5 0h4v1h-4zM5 1h4v1h-4zM5 2h4v1h-4zM5 3h4v1h-4zM5 4h4v1h-4zM0 5h14v1h-14zM0 6h14v1h-14zM0 7h14v1h-14zM0 8h14v1h-14zM5 9h4v1h-4zM5 10h4v1h-4zM5 11h4v1h-4zM5 12h4v1h-4zM5 13h4v1h-4z" fill="#22e622"/><path d="M9 1h1v1h-1zM9 2h1v1h-1zM9 3h1v1h-1zM9 4h1v1h-1zM14 6h1v1h-1zM14 7h1v1h-1zM14 8h1v1h-1zM1 9h4v1h-4zM9 9h6v1h-6zM9 10h1v1h-1zM9 11h1v1h-1zM9 12h1v1h-1zM9 13h1v1h-1zM6 14h4v1h-4z" fill="#000"/></svg><svg style="position:absolute;left:47px;top:207px;" width="16" height="16" shape-rendering="crispEdges"><path d="M2 0h2v1h-2zM6 0h7v1h-7zM3 1h1v1h-1zM5 1h2v1h-2zM12 1h2v1h-2zM4 2h1v1h-1zM6 2h1v1h-1zM9 2h2v1h-2zM12 2h1v1h-1zM14 2h1v1h-1zM5 3h1v1h-1zM7 3h1v1h-1zM13 3h3v1h-3zM6 4h1v1h-1zM8 4h1v1h-1zM15 4h1v1h-1zM6 5h2v1h-2zM9 5h1v1h-1zM12 5h2v1h-2zM15 5h1v1h-1zM0 6h3v1h-3zM7 6h2v1h-2zM10 6h1v1h-1zM15 6h1v1h-1zM1 7h1v1h-1zM4 7h6v1h-6zM11 7h1v1h-1zM15 7h1v1h-1zM1 8h1v1h-1zM9 8h2v1h-2zM15 8h1v1h-1zM1 9h1v1h-1zM5 9h7v1h-7zM15 9h1v1h-1zM1 10h1v1h-1zM9 10h1v1h-1zM11 10h1v1h-1zM15 10h1v1h-1zM1 11h1v1h-1zM5 11h5v1h-5zM13 11h1v1h-1zM15 11h1v1h-1zM1 12h1v1h-1zM8 12h1v1h-1zM15 12h1v1h-1zM0 13h3v1h-3zM4 13h4v1h-4zM10 13h1v1h-1zM12 13h2v1h-2zM15 13h1v1h-1zM6 14h1v1h-1zM15 14h1v1h-1zM6 15h10v1h-10z" fill="#000"/><path d="M4 1h1v1h-1zM7 1h5v1h-5zM5 2h1v1h-1zM7 2h2v1h-2zM11 2h1v1h-1zM13 2h1v1h-1zM6 3h1v1h-1zM8 3h5v1h-5zM7 4h1v1h-1zM9 4h6v1h-6zM8 5h1v1h-1zM10 5h2v1h-2zM14 5h1v1h-1zM9 6h1v1h-1zM11 6h4v1h-4zM10 7h1v1h-1zM12 7h3v1h-3zM11 8h4v1h-4zM12 9h3v1h-3zM10 10h1v1h-1zM12 10h3v1h-3zM10 11h3v1h-3zM14 11h1v1h-1zM9 12h6v1h-6zM8 13h2v1h-2zM11 13h1v1h-1zM14 13h1v1h-1zM7 14h8v1h-8z" fill="#fff"/><path d="M3 6h4v1h-4zM2 7h2v1h-2zM2 8h7v1h-7zM2 9h3v1h-3zM2 10h7v1h-7zM2 11h3v1h-3zM2 12h6v1h-6zM3 13h1v1h-1z" fill="#f0f088"/></svg><svg style="position:absolute;left:70px;top:212px;" width="15" height="5" shape-rendering="crispEdges"><path d="M0 0h14v1h-14zM0 1h14v1h-14zM0 2h14v1h-14zM0 3h14v1h-14z" fill="#e00000"/><path d="M14 1h1v1h-1zM14 2h1v1h-1zM14 3h1v1h-1zM1 4h14v1h-14z" fill="#400000"/></svg><div class="" style="left:93px;top:206px;width:2px;height:19px;border-left:1px solid #808080;border-right:1px solid #fff"></div><svg style="position:absolute;left:101px;top:207px" width="16" height="16" viewBox="0 0 16 16">
<path d="M13.9 9.6 A6.5 6.5 0 1 1 12.2 3.2" stroke="#e00000" stroke-width="2.1" fill="none"/>
<path d="M9.2 6.2L15.6 6.2L15.6 0.2z" fill="#e00000"/>
<path d="M6.2 2h3.1l-0.8 6.5h-1.5z M6.5 10h2.5v2.5h-2.5z" fill="#000"/></svg><div class="" style="left:8px;top:230px;width:375px;height:113px;background:#fff;border:1px solid;border-color:#808080 #fff #fff #808080"></div><div style="left:9px;top:231px;width:373px;height:111px;overflow:hidden"><div style="left:0px;top:0px;width:12px;height:16px;background:#D4D0C8;border-top:1px solid #fff;border-left:1px solid #fff;border-right:1px solid #808080;border-bottom:1px solid #808080"></div><div style="left:12px;top:0px;width:113px;height:16px;background:#D4D0C8;border-top:1px solid #fff;border-left:1px solid #fff;border-right:1px solid #808080;border-bottom:1px solid #808080"></div><div style="left:125px;top:0px;width:82px;height:16px;background:#D4D0C8;border-top:1px solid #fff;border-left:1px solid #fff;border-right:1px solid #808080;border-bottom:1px solid #808080"></div><div style="left:207px;top:0px;width:82px;height:16px;background:#D4D0C8;border-top:1px solid #fff;border-left:1px solid #fff;border-right:1px solid #808080;border-bottom:1px solid #808080"></div><div style="left:289px;top:0px;width:34px;height:16px;background:#D4D0C8;border-top:1px solid #fff;border-left:1px solid #fff;border-right:1px solid #808080;border-bottom:1px solid #808080"></div><div style="left:323px;top:0px;width:35px;height:16px;background:#D4D0C8;border-top:1px solid #fff;border-left:1px solid #fff;border-right:1px solid #808080;border-bottom:1px solid #808080"></div><div class="t" style="left:14px;top:2px;width:93px;overflow:hidden">Наименование товара</div><svg style="position:absolute;left:112px;top:4px;" width="8" height="7" shape-rendering="crispEdges"><path d="M3 0h1v1h-1zM3 1h1v1h-1zM2 2h1v1h-1zM2 3h1v1h-1zM1 4h1v1h-1zM1 5h1v1h-1zM0 6h1v1h-1z" fill="#808080"/><path d="M4 0h1v1h-1zM4 1h1v1h-1zM5 2h1v1h-1zM5 3h1v1h-1zM6 4h1v1h-1zM6 5h1v1h-1zM1 6h7v1h-7z" fill="#fff"/></svg><div class="t" style="left:127px;top:2px;width:78px;overflow:hidden">Назначение</div><div class="t" style="left:209px;top:2px;width:78px;overflow:hidden">Свойство</div><div class="t" style="left:291px;top:2px;width:30px;overflow:hidden">Ед.изм</div><div class="t" style="left:325px;top:2px;width:31px;overflow:hidden">Цена</div><div style="left:0px;top:16px;width:12px;height:16px;background:#D4D0C8;border-top:1px solid #fff;border-left:1px solid #fff;border-right:1px solid #808080;border-bottom:1px solid #808080"></div><div style="left:12px;top:16px;width:113px;height:16px;background:#fff;border-right:1px solid #c0c0c0;border-bottom:1px solid #c0c0c0;overflow:hidden"><div class="t" style="left:1px;top:2px;color:#000">Водка Nemiroff "Кльовая"</div></div><div style="left:125px;top:16px;width:82px;height:16px;background:#fff;border-right:1px solid #c0c0c0;border-bottom:1px solid #c0c0c0;overflow:hidden"><div class="t" style="left:1px;top:2px;color:#000">Горячительные напитки</div></div><div style="left:207px;top:16px;width:82px;height:16px;background:#fff;border-right:1px solid #c0c0c0;border-bottom:1px solid #c0c0c0;overflow:hidden"><div class="t" style="left:1px;top:2px;color:#000">Водка</div></div><div style="left:289px;top:16px;width:34px;height:16px;background:#fff;border-right:1px solid #c0c0c0;border-bottom:1px solid #c0c0c0;overflow:hidden"><div class="t" style="left:1px;top:2px;color:#000">бут.</div></div><div style="left:323px;top:16px;width:35px;height:16px;background:#fff;border-right:1px solid #c0c0c0;border-bottom:1px solid #c0c0c0;overflow:hidden"><div class="t" style="right:2px;top:2px;color:#000">5,29</div></div><div style="left:0px;top:32px;width:12px;height:16px;background:#D4D0C8;border-top:1px solid #fff;border-left:1px solid #fff;border-right:1px solid #808080;border-bottom:1px solid #808080"></div><div style="left:12px;top:32px;width:113px;height:16px;background:#fff;border-right:1px solid #c0c0c0;border-bottom:1px solid #c0c0c0;overflow:hidden"><div class="t" style="left:1px;top:2px;color:#000">Огурцы маринованные</div></div><div style="left:125px;top:32px;width:82px;height:16px;background:#fff;border-right:1px solid #c0c0c0;border-bottom:1px solid #c0c0c0;overflow:hidden"><div class="t" style="left:1px;top:2px;color:#000">Продукты питания</div></div><div style="left:207px;top:32px;width:82px;height:16px;background:#fff;border-right:1px solid #c0c0c0;border-bottom:1px solid #c0c0c0;overflow:hidden"><div class="t" style="left:1px;top:2px;color:#000">Консервация</div></div><div style="left:289px;top:32px;width:34px;height:16px;background:#fff;border-right:1px solid #c0c0c0;border-bottom:1px solid #c0c0c0;overflow:hidden"><div class="t" style="left:1px;top:2px;color:#000">бан.</div></div><div style="left:323px;top:32px;width:35px;height:16px;background:#fff;border-right:1px solid #c0c0c0;border-bottom:1px solid #c0c0c0;overflow:hidden"><div class="t" style="right:2px;top:2px;color:#000">6,98</div></div><div style="left:0px;top:48px;width:12px;height:16px;background:#D4D0C8;border-top:1px solid #fff;border-left:1px solid #fff;border-right:1px solid #808080;border-bottom:1px solid #808080"></div><svg style="position:absolute;left:3px;top:51px;" width="5" height="9" shape-rendering="crispEdges"><path d="M0 0h1v1h-1zM0 1h2v1h-2zM0 2h3v1h-3zM0 3h4v1h-4zM0 4h5v1h-5zM0 5h4v1h-4zM0 6h3v1h-3zM0 7h2v1h-2zM0 8h1v1h-1z" fill="#000"/></svg><div style="left:12px;top:48px;width:113px;height:16px;background:#0A246A;border-right:1px solid #c0c0c0;border-bottom:1px solid #c0c0c0;overflow:hidden"><div class="t" style="left:1px;top:2px;color:#fff">Телевизор</div><div style="left:0;top:0;width:112px;height:15px;border:1px dotted #fff"></div></div><div style="left:125px;top:48px;width:82px;height:16px;background:#fff;border-right:1px solid #c0c0c0;border-bottom:1px solid #c0c0c0;overflow:hidden"><div class="t" style="left:1px;top:2px;color:#000">Просмотр телепередач</div></div><div style="left:207px;top:48px;width:82px;height:16px;background:#fff;border-right:1px solid #c0c0c0;border-bottom:1px solid #c0c0c0;overflow:hidden"><div class="t" style="left:1px;top:2px;color:#000">Електронное устройство</div></div><div style="left:289px;top:48px;width:34px;height:16px;background:#fff;border-right:1px solid #c0c0c0;border-bottom:1px solid #c0c0c0;overflow:hidden"><div class="t" style="left:1px;top:2px;color:#000">шт.</div></div><div style="left:323px;top:48px;width:35px;height:16px;background:#fff;border-right:1px solid #c0c0c0;border-bottom:1px solid #c0c0c0;overflow:hidden"><div class="t" style="right:2px;top:2px;color:#000">1 500,00</div></div></div><div class="" style="left:366px;top:231px;width:16px;height:111px;background-color:#fff;background-image:linear-gradient(45deg,#D4D0C8 25%,transparent 25%,transparent 75%,#D4D0C8 75%),linear-gradient(45deg,#D4D0C8 25%,transparent 25%,transparent 75%,#D4D0C8 75%);background-size:2px 2px;background-position:0 0,1px 1px"></div><div class="rb" style="left:366px;top:231px;width:16px;height:16px;"></div><svg style="position:absolute;left:370px;top:237px" width="7" height="4"><path d="M3 0h1v1h1v1h1v1h1v1h-7v-1h1v-1h1v-1h1z" fill="#000"/></svg><div class="rb" style="left:366px;top:326px;width:16px;height:16px;"></div><svg style="position:absolute;left:370px;top:332px" width="7" height="4"><path d="M0 0h7v1h-1v1h-1v1h-1v1h-1v-1h-1v-1h-1v-1h-1z" fill="#000"/></svg><div class="rb" style="left:366px;top:279px;width:16px;height:47px;"></div><div class="sk1" style="left:8px;top:345px;width:100px;height:17px;"></div><div class="t" style="left:9px;top:348px;">Отобрано: 3</div><div class="sk1" style="left:110px;top:345px;width:273px;height:17px;"></div><svg style="position:absolute;left:371px;top:350px" width="12" height="12">
<path d="M11 0L0 11M11 4L4 11M11 8L8 11" stroke="#808080" stroke-width="1.4"/>
<path d="M11 1.5L1.5 11M11 5.5L5.5 11M11 9.5L9.5 11" stroke="#fff" stroke-width="1"/></svg><div class="wf" style="left:390px;top:157px;width:628px;height:347px;"></div><div class="" style="left:394px;top:161px;width:620px;height:18px;background:linear-gradient(to right,#808080,#C0C0C0)"></div><svg style="position:absolute;left:396px;top:164px;" width="16" height="12" shape-rendering="crispEdges"><path d="M6 0h8v1h-8zM6 1h1v1h-1zM13 1h1v1h-1zM4 2h10v1h-10zM13 3h1v1h-1zM2 4h8v1h-8zM12 4h1v1h-1zM2 5h1v1h-1zM9 5h1v1h-1zM12 5h1v1h-1zM1 6h1v1h-1zM9 6h1v1h-1zM11 6h1v1h-1zM0 7h10v1h-10zM11 7h1v1h-1zM8 8h1v1h-1zM0 9h9v1h-9zM8 10h1v1h-1zM0 11h9v1h-9z" fill="#000"/><path d="M7 1h6v1h-6zM0 8h8v1h-8zM0 10h8v1h-8z" fill="#1c8c1c"/><path d="M4 3h1v1h-1zM10 7h1v1h-1zM10 8h1v1h-1z" fill="#f4f4d8"/><path d="M5 3h6v1h-6zM10 4h2v1h-2zM10 5h2v1h-2zM10 6h1v1h-1z" fill="#e8e870"/><path d="M11 3h2v1h-2z" fill="#a0a028"/><path d="M3 5h6v1h-6zM2 6h7v1h-7z" fill="#30e030"/></svg><div class="t" style="left:413px;top:164px;color:#DEDCD6;font-weight:bold;letter-spacing:0.65px">Журнал "Покупка товара": Добавить</div><div class="rb" style="left:996px;top:163px;width:16px;height:14px;"></div><svg style="position:absolute;left:996px;top:163px" width="16" height="14"><path d="M4 3h2v1h1v1h2v-1h1v-1h2v1h-1v1h-1v1h-1v1h1v1h1v1h1v1h-2v-1h-1v-1h-2v1h-1v1h-2v-1h1v-1h1v-1h1v-1h-1v-1h-1v-1h-1z" fill="#000"/></svg><div class="rb" style="left:978px;top:163px;width:16px;height:14px;"></div><svg style="position:absolute;left:978px;top:163px" width="16" height="14"><path d="M3 2h9v9h-9z M4 4h7v6h-7z" fill="#000" fill-rule="evenodd"/></svg><div class="rb" style="left:962px;top:163px;width:16px;height:14px;"></div><div style="position:absolute;left:966px;top:172px;width:6px;height:2px;background:#808080;box-shadow:1px 1px #fff"></div><div class="t" style="left:402px;top:189px;">Дата</div><div class="sk" style="left:402px;top:204px;width:144px;height:20px;background:#fff"></div><div class="rb" style="left:529px;top:206px;width:16px;height:17px;"></div><svg style="position:absolute;left:533px;top:212px" width="7" height="4"><path d="M0 0h7v1h-1v1h-1v1h-1v1h-1v-1h-1v-1h-1v-1h-1z" fill="#000"/></svg><div class="t" style="left:406px;top:208px;">26</div><div class="t" style="left:426px;top:208px;">вересня</div><div class="t" style="left:477px;top:208px;">2008</div><div class="t" style="left:504px;top:208px;">р.</div><div class="t" style="left:554px;top:189px;">Курс</div><div class="sk" style="left:554px;top:204px;width:136px;height:20px;background:#fff"></div><div class="rb" style="left:670px;top:206px;width:19px;height:17px;"></div><svg style="position:absolute;left:672px;top:208px;" width="14" height="12" shape-rendering="crispEdges"><path d="M1 0h12v1h-12zM0 1h1v1h-1zM0 2h1v1h-1zM0 3h1v1h-1zM0 4h1v1h-1zM0 5h1v1h-1zM0 6h1v1h-1zM0 7h1v1h-1zM0 8h1v1h-1zM0 9h1v1h-1z" fill="#40d0d0"/><path d="M1 1h12v1h-12zM1 2h1v1h-1zM11 2h2v1h-2zM1 3h1v1h-1zM11 3h2v1h-2zM1 4h1v1h-1zM11 4h2v1h-2zM1 5h12v1h-12zM1 6h2v1h-2zM4 6h1v1h-1zM6 6h1v1h-1zM8 6h1v1h-1zM10 6h3v1h-3zM1 7h12v1h-12zM1 8h2v1h-2zM4 8h1v1h-1zM6 8h1v1h-1zM8 8h1v1h-1zM10 8h3v1h-3zM1 9h12v1h-12z" fill="#0a6878"/><path d="M13 1h1v1h-1zM13 2h1v1h-1zM13 3h1v1h-1zM13 4h1v1h-1zM13 5h1v1h-1zM13 6h1v1h-1zM13 7h1v1h-1zM13 8h1v1h-1zM13 9h1v1h-1zM0 10h14v1h-14zM1 11h12v1h-12z" fill="#001030"/><path d="M2 2h9v1h-9zM2 3h1v1h-1zM10 3h1v1h-1zM2 4h1v1h-1zM10 4h1v1h-1z" fill="#000"/><path d="M3 3h7v1h-7zM3 4h7v1h-7z" fill="#a8d8f0"/><path d="M3 6h1v1h-1zM5 6h1v1h-1zM7 6h1v1h-1zM9 6h1v1h-1zM3 8h1v1h-1zM5 8h1v1h-1zM7 8h1v1h-1zM9 8h1v1h-1z" fill="#c0f0f0"/></svg><div class="t" style="right:359px;top:208px;text-align:right;">1</div><div class="t" style="left:402px;top:233px;">Товар</div><div class="sk" style="left:402px;top:248px;width:225px;height:21px;background:#D4D0C8"></div><div class="t" style="left:405px;top:251px;">Телевизор</div><div class="" style="left:630px;top:247px;width:30px;height:23px;border:1px solid #000"></div><div class="rb" style="left:631px;top:248px;width:28px;height:21px;"></div><svg style="position:absolute;left:637px;top:255px;" width="16" height="9" shape-rendering="crispEdges"><path d="M8 0h2v1h-2zM6 1h2v1h-2zM9 1h1v1h-1zM4 2h2v1h-2zM9 2h1v1h-1zM2 3h2v1h-2zM9 3h7v1h-7zM0 4h2v1h-2zM15 4h1v1h-1zM2 5h2v1h-2zM9 5h7v1h-7zM4 6h2v1h-2zM9 6h1v1h-1zM6 7h2v1h-2zM9 7h1v1h-1zM8 8h2v1h-2z" fill="#200000"/><path d="M8 1h1v1h-1zM6 2h3v1h-3zM4 3h5v1h-5zM2 4h13v1h-13zM4 5h5v1h-5zM6 6h3v1h-3zM8 7h1v1h-1z" fill="#ee0000"/></svg><div class="rb" style="left:662px;top:247px;width:30px;height:23px;"></div><svg style="position:absolute;left:668px;top:250px;" width="18" height="16" shape-rendering="crispEdges"><path d="M15 1h1v1h-1zM4 2h1v1h-1zM14 2h1v1h-1zM13 3h1v1h-1zM5 4h1v1h-1zM12 4h1v1h-1zM14 4h1v1h-1zM11 5h1v1h-1zM13 5h1v1h-1zM15 5h1v1h-1zM17 5h1v1h-1zM6 6h1v1h-1zM10 6h1v1h-1zM12 6h1v1h-1zM14 6h1v1h-1zM16 6h1v1h-1zM2 7h3v1h-3zM9 7h3v1h-3zM13 7h1v1h-1zM15 7h1v1h-1zM1 8h2v1h-2zM5 8h1v1h-1zM11 8h2v1h-2zM14 8h1v1h-1zM1 9h2v1h-2zM12 9h2v1h-2zM3 10h4v1h-4zM12 10h1v1h-1zM2 11h2v1h-2zM6 11h2v1h-2zM11 11h1v1h-1zM1 12h2v1h-2zM6 12h2v1h-2zM10 12h1v1h-1zM1 13h2v1h-2zM5 13h3v1h-3zM10 13h1v1h-1zM1 14h5v1h-5zM7 14h2v1h-2zM12 14h1v1h-1zM2 15h3v1h-3z" fill="#000"/><path d="M15 2h2v1h-2zM14 3h4v1h-4zM13 4h1v1h-1zM15 4h3v1h-3zM12 5h1v1h-1zM14 5h1v1h-1zM16 5h1v1h-1zM11 6h1v1h-1zM13 6h1v1h-1zM15 6h1v1h-1zM12 7h1v1h-1zM14 7h1v1h-1zM13 8h1v1h-1z" fill="#f0f020"/><path d="M8 8h3v1h-3zM7 9h5v1h-5zM7 10h5v1h-5zM8 11h3v1h-3zM9 12h1v1h-1z" fill="#e81020"/></svg><div class="t" style="left:402px;top:277px;">Счет</div><div class="sk" style="left:402px;top:292px;width:225px;height:21px;background:#D4D0C8"></div><div class="t" style="left:405px;top:295px;">Кошелек</div><div class="rb" style="left:630px;top:291px;width:30px;height:23px;"></div><svg style="position:absolute;left:637px;top:299px;" width="16" height="9" shape-rendering="crispEdges"><path d="M8 0h2v1h-2zM6 1h2v1h-2zM9 1h1v1h-1zM4 2h2v1h-2zM9 2h1v1h-1zM2 3h2v1h-2zM9 3h7v1h-7zM0 4h2v1h-2zM15 4h1v1h-1zM2 5h2v1h-2zM9 5h7v1h-7zM4 6h2v1h-2zM9 6h1v1h-1zM6 7h2v1h-2zM9 7h1v1h-1zM8 8h2v1h-2z" fill="#200000"/><path d="M8 1h1v1h-1zM6 2h3v1h-3zM4 3h5v1h-5zM2 4h13v1h-13zM4 5h5v1h-5zM6 6h3v1h-3zM8 7h1v1h-1z" fill="#ee0000"/></svg><div class="rb" style="left:662px;top:291px;width:30px;height:23px;"></div><svg style="position:absolute;left:668px;top:294px;" width="18" height="16" shape-rendering="crispEdges"><path d="M15 1h1v1h-1zM4 2h1v1h-1zM14 2h1v1h-1zM13 3h1v1h-1zM5 4h1v1h-1zM12 4h1v1h-1zM14 4h1v1h-1zM11 5h1v1h-1zM13 5h1v1h-1zM15 5h1v1h-1zM17 5h1v1h-1zM6 6h1v1h-1zM10 6h1v1h-1zM12 6h1v1h-1zM14 6h1v1h-1zM16 6h1v1h-1zM2 7h3v1h-3zM9 7h3v1h-3zM13 7h1v1h-1zM15 7h1v1h-1zM1 8h2v1h-2zM5 8h1v1h-1zM11 8h2v1h-2zM14 8h1v1h-1zM1 9h2v1h-2zM12 9h2v1h-2zM3 10h4v1h-4zM12 10h1v1h-1zM2 11h2v1h-2zM6 11h2v1h-2zM11 11h1v1h-1zM1 12h2v1h-2zM6 12h2v1h-2zM10 12h1v1h-1zM1 13h2v1h-2zM5 13h3v1h-3zM10 13h1v1h-1zM1 14h5v1h-5zM7 14h2v1h-2zM12 14h1v1h-1zM2 15h3v1h-3z" fill="#000"/><path d="M15 2h2v1h-2zM14 3h4v1h-4zM13 4h1v1h-1zM15 4h3v1h-3zM12 5h1v1h-1zM14 5h1v1h-1zM16 5h1v1h-1zM11 6h1v1h-1zM13 6h1v1h-1zM15 6h1v1h-1zM12 7h1v1h-1zM14 7h1v1h-1zM13 8h1v1h-1z" fill="#f0f020"/><path d="M8 8h3v1h-3zM7 9h5v1h-5zM7 10h5v1h-5zM8 11h3v1h-3zM9 12h1v1h-1z" fill="#e81020"/></svg><div class="t" style="left:402px;top:321px;">Валюта</div><div class="sk" style="left:402px;top:336px;width:225px;height:21px;background:#D4D0C8"></div><div class="t" style="left:405px;top:339px;">гривна</div><div class="rb" style="left:630px;top:335px;width:30px;height:23px;"></div><svg style="position:absolute;left:637px;top:343px;" width="16" height="9" shape-rendering="crispEdges"><path d="M8 0h2v1h-2zM6 1h2v1h-2zM9 1h1v1h-1zM4 2h2v1h-2zM9 2h1v1h-1zM2 3h2v1h-2zM9 3h7v1h-7zM0 4h2v1h-2zM15 4h1v1h-1zM2 5h2v1h-2zM9 5h7v1h-7zM4 6h2v1h-2zM9 6h1v1h-1zM6 7h2v1h-2zM9 7h1v1h-1zM8 8h2v1h-2z" fill="#200000"/><path d="M8 1h1v1h-1zM6 2h3v1h-3zM4 3h5v1h-5zM2 4h13v1h-13zM4 5h5v1h-5zM6 6h3v1h-3zM8 7h1v1h-1z" fill="#ee0000"/></svg><div class="rb" style="left:662px;top:335px;width:30px;height:23px;"></div><svg style="position:absolute;left:668px;top:338px;" width="18" height="16" shape-rendering="crispEdges"><path d="M15 1h1v1h-1zM4 2h1v1h-1zM14 2h1v1h-1zM13 3h1v1h-1zM5 4h1v1h-1zM12 4h1v1h-1zM14 4h1v1h-1zM11 5h1v1h-1zM13 5h1v1h-1zM15 5h1v1h-1zM17 5h1v1h-1zM6 6h1v1h-1zM10 6h1v1h-1zM12 6h1v1h-1zM14 6h1v1h-1zM16 6h1v1h-1zM2 7h3v1h-3zM9 7h3v1h-3zM13 7h1v1h-1zM15 7h1v1h-1zM1 8h2v1h-2zM5 8h1v1h-1zM11 8h2v1h-2zM14 8h1v1h-1zM1 9h2v1h-2zM12 9h2v1h-2zM3 10h4v1h-4zM12 10h1v1h-1zM2 11h2v1h-2zM6 11h2v1h-2zM11 11h1v1h-1zM1 12h2v1h-2zM6 12h2v1h-2zM10 12h1v1h-1zM1 13h2v1h-2zM5 13h3v1h-3zM10 13h1v1h-1zM1 14h5v1h-5zM7 14h2v1h-2zM12 14h1v1h-1zM2 15h3v1h-3z" fill="#000"/><path d="M15 2h2v1h-2zM14 3h4v1h-4zM13 4h1v1h-1zM15 4h3v1h-3zM12 5h1v1h-1zM14 5h1v1h-1zM16 5h1v1h-1zM11 6h1v1h-1zM13 6h1v1h-1zM15 6h1v1h-1zM12 7h1v1h-1zM14 7h1v1h-1zM13 8h1v1h-1z" fill="#f0f020"/><path d="M8 8h3v1h-3zM7 9h5v1h-5zM7 10h5v1h-5zM8 11h3v1h-3zM9 12h1v1h-1z" fill="#e81020"/></svg><div class="sk" style="left:702px;top:254px;width:13px;height:13px;"></div><div class="t" style="left:720px;top:254px;">Сделать сразу расход</div><div class="t" style="left:702px;top:277px;">Вид расхода</div><div class="sk" style="left:702px;top:292px;width:225px;height:21px;background:#D4D0C8"></div><div class="rb" style="left:930px;top:291px;width:30px;height:23px;"></div><svg style="position:absolute;left:938px;top:300px;" width="16" height="9" shape-rendering="crispEdges"><path d="M8 0h2v1h-2zM6 1h2v1h-2zM9 1h1v1h-1zM4 2h2v1h-2zM9 2h1v1h-1zM2 3h2v1h-2zM9 3h7v1h-7zM0 4h2v1h-2zM15 4h1v1h-1zM2 5h2v1h-2zM9 5h7v1h-7zM4 6h2v1h-2zM9 6h1v1h-1zM6 7h2v1h-2zM9 7h1v1h-1zM8 8h2v1h-2z" fill="#fff"/></svg><svg style="position:absolute;left:937px;top:299px;" width="16" height="9" shape-rendering="crispEdges"><path d="M8 0h2v1h-2zM6 1h2v1h-2zM9 1h1v1h-1zM4 2h2v1h-2zM9 2h1v1h-1zM2 3h2v1h-2zM9 3h7v1h-7zM0 4h2v1h-2zM15 4h1v1h-1zM2 5h2v1h-2zM9 5h7v1h-7zM4 6h2v1h-2zM9 6h1v1h-1zM6 7h2v1h-2zM9 7h1v1h-1zM8 8h2v1h-2z" fill="#808080"/></svg><div class="rb" style="left:962px;top:291px;width:30px;height:23px;"></div><svg style="position:absolute;left:969px;top:295px;" width="18" height="16" shape-rendering="crispEdges"><path d="M15 1h1v1h-1zM4 2h1v1h-1zM14 2h3v1h-3zM13 3h5v1h-5zM5 4h1v1h-1zM12 4h6v1h-6zM11 5h7v1h-7zM6 6h1v1h-1zM10 6h7v1h-7zM2 7h3v1h-3zM9 7h7v1h-7zM1 8h2v1h-2zM5 8h1v1h-1zM8 8h7v1h-7zM1 9h2v1h-2zM7 9h7v1h-7zM3 10h10v1h-10zM2 11h2v1h-2zM6 11h6v1h-6zM1 12h2v1h-2zM6 12h2v1h-2zM9 12h2v1h-2zM1 13h2v1h-2zM5 13h3v1h-3zM10 13h1v1h-1zM1 14h5v1h-5zM7 14h2v1h-2zM12 14h1v1h-1zM2 15h3v1h-3z" fill="#fff"/></svg><svg style="position:absolute;left:968px;top:294px;" width="18" height="16" shape-rendering="crispEdges"><path d="M15 1h1v1h-1zM4 2h1v1h-1zM14 2h3v1h-3zM13 3h5v1h-5zM5 4h1v1h-1zM12 4h6v1h-6zM11 5h7v1h-7zM6 6h1v1h-1zM10 6h7v1h-7zM2 7h3v1h-3zM9 7h7v1h-7zM1 8h2v1h-2zM5 8h1v1h-1zM8 8h7v1h-7zM1 9h2v1h-2zM7 9h7v1h-7zM3 10h10v1h-10zM2 11h2v1h-2zM6 11h6v1h-6zM1 12h2v1h-2zM6 12h2v1h-2zM9 12h2v1h-2zM1 13h2v1h-2zM5 13h3v1h-3zM10 13h1v1h-1zM1 14h5v1h-5zM7 14h2v1h-2zM12 14h1v1h-1zM2 15h3v1h-3z" fill="#808080"/></svg><div class="t" style="left:702px;top:321px;">Контрагент</div><div class="sk" style="left:702px;top:336px;width:225px;height:21px;background:#D4D0C8"></div><div class="rb" style="left:930px;top:335px;width:30px;height:23px;"></div><svg style="position:absolute;left:938px;top:344px;" width="16" height="9" shape-rendering="crispEdges"><path d="M8 0h2v1h-2zM6 1h2v1h-2zM9 1h1v1h-1zM4 2h2v1h-2zM9 2h1v1h-1zM2 3h2v1h-2zM9 3h7v1h-7zM0 4h2v1h-2zM15 4h1v1h-1zM2 5h2v1h-2zM9 5h7v1h-7zM4 6h2v1h-2zM9 6h1v1h-1zM6 7h2v1h-2zM9 7h1v1h-1zM8 8h2v1h-2z" fill="#fff"/></svg><svg style="position:absolute;left:937px;top:343px;" width="16" height="9" shape-rendering="crispEdges"><path d="M8 0h2v1h-2zM6 1h2v1h-2zM9 1h1v1h-1zM4 2h2v1h-2zM9 2h1v1h-1zM2 3h2v1h-2zM9 3h7v1h-7zM0 4h2v1h-2zM15 4h1v1h-1zM2 5h2v1h-2zM9 5h7v1h-7zM4 6h2v1h-2zM9 6h1v1h-1zM6 7h2v1h-2zM9 7h1v1h-1zM8 8h2v1h-2z" fill="#808080"/></svg><div class="rb" style="left:962px;top:335px;width:30px;height:23px;"></div><svg style="position:absolute;left:969px;top:339px;" width="18" height="16" shape-rendering="crispEdges"><path d="M15 1h1v1h-1zM4 2h1v1h-1zM14 2h3v1h-3zM13 3h5v1h-5zM5 4h1v1h-1zM12 4h6v1h-6zM11 5h7v1h-7zM6 6h1v1h-1zM10 6h7v1h-7zM2 7h3v1h-3zM9 7h7v1h-7zM1 8h2v1h-2zM5 8h1v1h-1zM8 8h7v1h-7zM1 9h2v1h-2zM7 9h7v1h-7zM3 10h10v1h-10zM2 11h2v1h-2zM6 11h6v1h-6zM1 12h2v1h-2zM6 12h2v1h-2zM9 12h2v1h-2zM1 13h2v1h-2zM5 13h3v1h-3zM10 13h1v1h-1zM1 14h5v1h-5zM7 14h2v1h-2zM12 14h1v1h-1zM2 15h3v1h-3z" fill="#fff"/></svg><svg style="position:absolute;left:968px;top:338px;" width="18" height="16" shape-rendering="crispEdges"><path d="M15 1h1v1h-1zM4 2h1v1h-1zM14 2h3v1h-3zM13 3h5v1h-5zM5 4h1v1h-1zM12 4h6v1h-6zM11 5h7v1h-7zM6 6h1v1h-1zM10 6h7v1h-7zM2 7h3v1h-3zM9 7h7v1h-7zM1 8h2v1h-2zM5 8h1v1h-1zM8 8h7v1h-7zM1 9h2v1h-2zM7 9h7v1h-7zM3 10h10v1h-10zM2 11h2v1h-2zM6 11h6v1h-6zM1 12h2v1h-2zM6 12h2v1h-2zM9 12h2v1h-2zM1 13h2v1h-2zM5 13h3v1h-3zM10 13h1v1h-1zM1 14h5v1h-5zM7 14h2v1h-2zM12 14h1v1h-1zM2 15h3v1h-3z" fill="#808080"/></svg><div class="t" style="left:402px;top:365px;">Количество</div><div class="sk" style="left:402px;top:380px;width:188px;height:20px;background:#fff"></div><div class="rb" style="left:570px;top:382px;width:19px;height:17px;"></div><svg style="position:absolute;left:572px;top:384px;" width="14" height="12" shape-rendering="crispEdges"><path d="M1 0h12v1h-12zM0 1h1v1h-1zM0 2h1v1h-1zM0 3h1v1h-1zM0 4h1v1h-1zM0 5h1v1h-1zM0 6h1v1h-1zM0 7h1v1h-1zM0 8h1v1h-1zM0 9h1v1h-1z" fill="#40d0d0"/><path d="M1 1h12v1h-12zM1 2h1v1h-1zM11 2h2v1h-2zM1 3h1v1h-1zM11 3h2v1h-2zM1 4h1v1h-1zM11 4h2v1h-2zM1 5h12v1h-12zM1 6h2v1h-2zM4 6h1v1h-1zM6 6h1v1h-1zM8 6h1v1h-1zM10 6h3v1h-3zM1 7h12v1h-12zM1 8h2v1h-2zM4 8h1v1h-1zM6 8h1v1h-1zM8 8h1v1h-1zM10 8h3v1h-3zM1 9h12v1h-12z" fill="#0a6878"/><path d="M13 1h1v1h-1zM13 2h1v1h-1zM13 3h1v1h-1zM13 4h1v1h-1zM13 5h1v1h-1zM13 6h1v1h-1zM13 7h1v1h-1zM13 8h1v1h-1zM13 9h1v1h-1zM0 10h14v1h-14zM1 11h12v1h-12z" fill="#001030"/><path d="M2 2h9v1h-9zM2 3h1v1h-1zM10 3h1v1h-1zM2 4h1v1h-1zM10 4h1v1h-1z" fill="#000"/><path d="M3 3h7v1h-7zM3 4h7v1h-7z" fill="#a8d8f0"/><path d="M3 6h1v1h-1zM5 6h1v1h-1zM7 6h1v1h-1zM9 6h1v1h-1zM3 8h1v1h-1zM5 8h1v1h-1zM7 8h1v1h-1zM9 8h1v1h-1z" fill="#c0f0f0"/></svg><div class="t" style="right:459px;top:384px;text-align:right;">1</div><div class="t" style="left:602px;top:365px;">Сумма в валюте</div><div class="sk" style="left:602px;top:380px;width:188px;height:20px;background:#fff"></div><div class="rb" style="left:770px;top:382px;width:19px;height:17px;"></div><svg style="position:absolute;left:772px;top:384px;" width="14" height="12" shape-rendering="crispEdges"><path d="M1 0h12v1h-12zM0 1h1v1h-1zM0 2h1v1h-1zM0 3h1v1h-1zM0 4h1v1h-1zM0 5h1v1h-1zM0 6h1v1h-1zM0 7h1v1h-1zM0 8h1v1h-1zM0 9h1v1h-1z" fill="#40d0d0"/><path d="M1 1h12v1h-12zM1 2h1v1h-1zM11 2h2v1h-2zM1 3h1v1h-1zM11 3h2v1h-2zM1 4h1v1h-1zM11 4h2v1h-2zM1 5h12v1h-12zM1 6h2v1h-2zM4 6h1v1h-1zM6 6h1v1h-1zM8 6h1v1h-1zM10 6h3v1h-3zM1 7h12v1h-12zM1 8h2v1h-2zM4 8h1v1h-1zM6 8h1v1h-1zM8 8h1v1h-1zM10 8h3v1h-3zM1 9h12v1h-12z" fill="#0a6878"/><path d="M13 1h1v1h-1zM13 2h1v1h-1zM13 3h1v1h-1zM13 4h1v1h-1zM13 5h1v1h-1zM13 6h1v1h-1zM13 7h1v1h-1zM13 8h1v1h-1zM13 9h1v1h-1zM0 10h14v1h-14zM1 11h12v1h-12z" fill="#001030"/><path d="M2 2h9v1h-9zM2 3h1v1h-1zM10 3h1v1h-1zM2 4h1v1h-1zM10 4h1v1h-1z" fill="#000"/><path d="M3 3h7v1h-7zM3 4h7v1h-7z" fill="#a8d8f0"/><path d="M3 6h1v1h-1zM5 6h1v1h-1zM7 6h1v1h-1zM9 6h1v1h-1zM3 8h1v1h-1zM5 8h1v1h-1zM7 8h1v1h-1zM9 8h1v1h-1z" fill="#c0f0f0"/></svg><div class="t" style="right:259px;top:384px;text-align:right;">1 500</div><div class="t" style="left:802px;top:365px;">Сумма</div><div class="sk" style="left:802px;top:380px;width:188px;height:20px;background:#D4D0C8"></div><div class="rb" style="left:970px;top:382px;width:19px;height:17px;"></div><svg style="position:absolute;left:972px;top:384px;" width="14" height="12" shape-rendering="crispEdges"><path d="M1 0h12v1h-12zM0 1h1v1h-1zM0 2h1v1h-1zM0 3h1v1h-1zM0 4h1v1h-1zM0 5h1v1h-1zM0 6h1v1h-1zM0 7h1v1h-1zM0 8h1v1h-1zM0 9h1v1h-1z" fill="#40d0d0"/><path d="M1 1h12v1h-12zM1 2h1v1h-1zM11 2h2v1h-2zM1 3h1v1h-1zM11 3h2v1h-2zM1 4h1v1h-1zM11 4h2v1h-2zM1 5h12v1h-12zM1 6h2v1h-2zM4 6h1v1h-1zM6 6h1v1h-1zM8 6h1v1h-1zM10 6h3v1h-3zM1 7h12v1h-12zM1 8h2v1h-2zM4 8h1v1h-1zM6 8h1v1h-1zM8 8h1v1h-1zM10 8h3v1h-3zM1 9h12v1h-12z" fill="#0a6878"/><path d="M13 1h1v1h-1zM13 2h1v1h-1zM13 3h1v1h-1zM13 4h1v1h-1zM13 5h1v1h-1zM13 6h1v1h-1zM13 7h1v1h-1zM13 8h1v1h-1zM13 9h1v1h-1zM0 10h14v1h-14zM1 11h12v1h-12z" fill="#001030"/><path d="M2 2h9v1h-9zM2 3h1v1h-1zM10 3h1v1h-1zM2 4h1v1h-1zM10 4h1v1h-1z" fill="#000"/><path d="M3 3h7v1h-7zM3 4h7v1h-7z" fill="#a8d8f0"/><path d="M3 6h1v1h-1zM5 6h1v1h-1zM7 6h1v1h-1zM9 6h1v1h-1zM3 8h1v1h-1zM5 8h1v1h-1zM7 8h1v1h-1zM9 8h1v1h-1z" fill="#c0f0f0"/></svg><div class="t" style="right:59px;top:384px;text-align:right;">1 500</div><div class="t" style="left:402px;top:409px;">Комментарий</div><div class="sk" style="left:402px;top:424px;width:589px;height:21px;"></div><div class="rb" style="left:766px;top:456px;width:111px;height:25px;"></div><svg style="position:absolute;left:777px;top:460px" width="19" height="17"><path d="M1.5 9.5L4 7L7.5 10.5L16 2L18.5 4.5L7.5 15.5z" fill="#0a5a0a"/><path d="M1.5 8.5L3.5 6.5L7 10L15.5 1.5L17.5 3.5L7 14z" fill="#2cb82c"/><path d="M3.5 7.5L7 11L15.5 2.5" stroke="#7aea7a" stroke-width="1" fill="none"/></svg><div class="t" style="left:800px;top:462px;"><u>П</u>одтвердить</div><div class="rb" style="left:882px;top:456px;width:111px;height:25px;"></div><svg style="position:absolute;left:903px;top:460px" width="17" height="17"><path d="M4 4L14 15M14 3L4 15" stroke="#a00010" stroke-width="3.6" stroke-linecap="round"/></svg><div class="t" style="left:924px;top:462px;"><u>О</u>тменить</div></body></html>
